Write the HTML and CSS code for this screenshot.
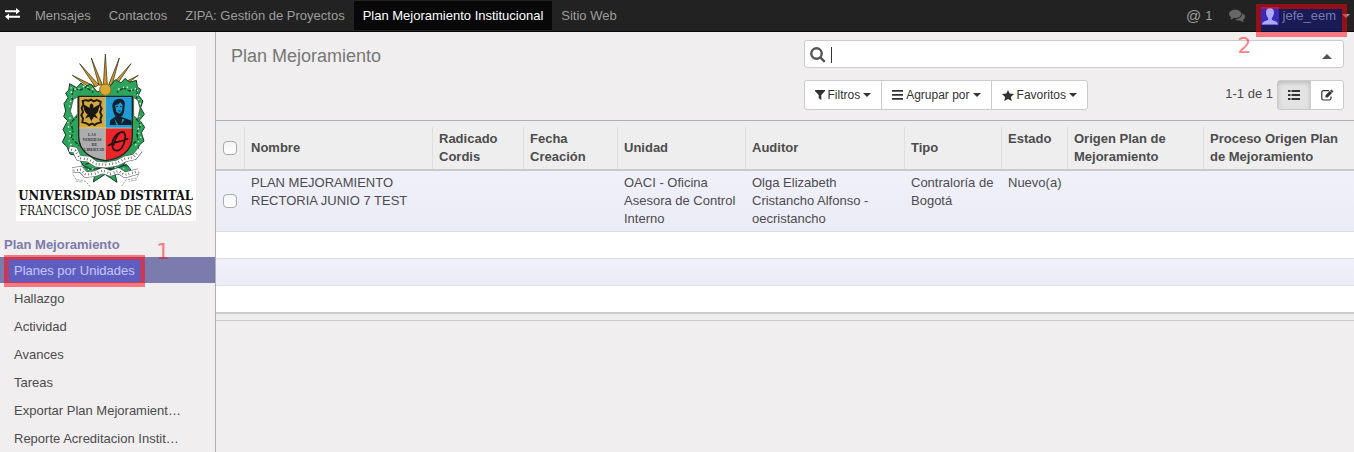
FILE: index.html
```html
<!DOCTYPE html>
<html lang="es">
<head>
<meta charset="utf-8">
<title>Plan Mejoramiento</title>
<link rel="stylesheet" href="styles.css">
</head>
<body>
<nav class="navbar">
  <button class="nav-toggle" aria-label="Cambiar menú">
    <svg width="15" height="12" viewBox="0 0 15 12"><path fill="#fff" d="M0 2.300h11V0l4 3.300-4 3.200V4.300H0zM15 7.700H4V5.500L0 8.700 4 12V9.700h11z"/></svg>
  </button>
  <a class="nav-link" href="#">Mensajes</a>
  <a class="nav-link" href="#">Contactos</a>
  <a class="nav-link" href="#">ZIPA: Gestión de Proyectos</a>
  <a class="nav-link nav-link-active" href="#">Plan Mejoramiento Institucional</a>
  <a class="nav-link" href="#">Sitio Web</a>
  <div class="nav-right">
    <a class="mentions" href="#"><span class="at">@</span> 1</a>
    <button class="chat" aria-label="Conversaciones">
      <svg width="16" height="14" viewBox="0 0 16 14"><g fill="#666"><path d="M6.200.8C2.800.8 0 2.700 0 5c0 1.300.9 2.500 2.200 3.200L1.300 10.500c1.500-.2 2.600-.9 3.300-1.500.5.1 1 .1 1.600.1 3.400 0 6.200-1.800 6.200-4.100S9.600.8 6.200.8z"/><path d="M13.300 4.200c.3 3.200-3 5.800-7.200 6 1.200 1 3.200 1.500 5.200 1.200.8.800 2 1.400 3.500 1.500l-.9-2.100c1.200-.7 2.100-1.700 2.100-2.900 0-1.600-1-2.900-2.700-3.700z"/></g></svg>
    </button>
    <div class="user">
      <button class="user-menu">
        <svg width="18" height="18" viewBox="0 0 18 18"><path fill="#5034a4" d="M0 0h18v18H0z"/><path fill="#dedeff" d="M9 1C6.500 1 5 2.700 5 5.300c0 2.500 1 4.600 2.200 5.600v1.600C6.800 14 1.500 13.500 1 17.500h16c-.5-4-5.800-3.500-6.200-5v-1.600C12 9.900 13 7.800 13 5.300 13 2.700 11.500 1 9 1z"/></svg>
        <span>jefe_eem</span>
      </button>
      <span class="mark mark-user"></span>
      <span class="mark-number mark-number-user">2</span>
    </div>
    <span class="caret caret-nav"></span>
  </div>
</nav>
<div class="shell">
  <aside class="sidebar">
    <a class="logo" href="#">
      <svg viewBox="18 18 540 525" role="img" aria-label="Universidad Distrital Francisco José de Caldas">
        <path fill="#fff" d="M18 18h540v525H18z"/>
        <g fill="#c99a2c" stroke="#2b220c" stroke-width="2"><path d="M280 134 286 42l6 92zM267 136 244 54l33 80zM296 134l32-80-22 82zM256 141 209 71l57 63zM306 134l57-63-47 70zM247 149l-60-43 67 33zM319 139l66-33-58 43z"/></g>
        <g fill="#2ea35b" stroke="#153e28" stroke-width="3">
          <path d="M262 156l-20-24-16 8-13-11-13 14-21-12-3 20-9 8 7 14-12 18 5 22-6 17 12 12-14 26 8 17-10 22 14 13 9 22 22 5 17 29 35 16 24-7 28 7 34-17 18-28 22-7 8-25 14-12-8-25 10-16-15-22 14-17-11-20 7-20-14-17 8-17-11-8-3-20-20 6-14-12-12 14-17-10-19 23z"/>
          <path d="M222 380l-16 14 14 12 35-5-5 25 35-23 36 24-6-26 35 4 14-14-15-18-30 14-37-3-40 4z"/>
        </g>
        <path fill="none" stroke="#123d25" stroke-width="4" stroke-dasharray="5 6 11 4" d="M250 157l-22-15-17 8-20-3-6 25 10 20-8 18 13 20-18 18 7 24-5 22 24 23M321 157l19-13 19 9 20-7 3 21-8 20 16 24-14 21 16 23-12 24 4 20-24 20M215 375l30-7 22 20 38 1 21-19 29 10"/>
        <path fill="none" stroke="#d7f5df" stroke-width="4" stroke-dasharray="5 11 3 9" d="M250 148l-27-9-24 10-16-7 2 30-7 26 11 17-16 35 8 31-4 26 26 29M324 148l24-9 21 12 13-8 1 26 9 25-11 22 15 32-13 22 10 24-23 30M218 386l25 3 24-12M300 375l27 14 25-6"/>
        <path fill="#fff" stroke="#333" stroke-width="2" d="M190 178l13-7v50l-12 15-10-22zM371 172l12 8 7 25-7 32-12-10z"/>
        <path fill="#d5aa3d" d="M207 170h79v95h-79z"/>
        <path fill="#219bd6" d="M286 170h80v95h-80z"/>
        <path fill="#adadb0" d="M207 265h79v95c-34-3-79-20-79-70z"/>
        <path fill="#ec2429" d="M286 265h80v25c0 50-46 67-80 70z"/>
        <path fill="none" stroke="#222" stroke-width="4" d="M206 169h161v119c0 50-42 69-81 74-39-5-80-24-80-74z"/>
        <path fill="none" stroke="#e8d9a0" stroke-width="2" d="M286 170v190M207 264h159"/>
        <path fill="none" stroke="#221c13" stroke-width="6" d="M218 183l10-3 7 3 8-4 8 5 9-4 12 5-2 12 5 9-5 10 5 11-4 11 2 9-12 3-7 5-8-4-8 4-8-5-13-3 2-12-5-9 5-10-4-12 5-10z"/>
        <path fill="#1b1713" d="M245 190l5 5v9c9-6 13-9 18-10-1 15-4 24-12 29l8 13-12-6-8 13-7-13-12 6 8-13c-9-6-12-14-13-29 7 1 12 5 19 10v-9z"/>
        <path fill="#10222d" d="M307 202c0-18 9-26 22-26 12 0 17 9 15 21l-2 18c-1 8-5 13-9 15l32 12v13h-66l2-14 16-12c-6-6-9-18-9-27z"/>
        <path fill="#219bd6" d="M315 195c8 1 12-4 16-8l7 8-2 18-7 8-10-5zM313 235l12 20-6-1zM337 236l-3 16 9-13z"/>
        <path fill="none" stroke="#10222d" stroke-width="3" d="M318 200l6-1M330 200h5M325 213h7"/>
        <g class="crest-motto"><text x="246" y="287">LAS</text><text x="246" y="303">VEREDAS</text><text x="253" y="318">DE</text><text x="252" y="334">LIBERTAD</text></g>
        <path fill="none" stroke="#241013" stroke-width="5" d="M345 277c-21-6-40 18-38 39 1 18 18 21 28 8 9-12 16-39 6-46-14-9-27 22-30 38M294 318c15-15 42-11 61-23"/>
        <circle cx="286" cy="149" r="17" fill="#d9a937" stroke="#8d6a1b" stroke-width="3"/>
        <g fill="none" stroke-linejoin="round">
          <path stroke="#555" stroke-width="18" d="M178 327l17 3 11 24 31 4 20 14 31 3 34-6 23-12 28-6 17-21M187 391l26-3 14 16 28-3 23-9 23 8 24-8 20 13 40-11"/>
          <path stroke="#fff" stroke-width="15" d="M178 327l17 3 11 24 31 4 20 14 31 3 34-6 23-12 28-6 17-21M187 391l26-3 14 16 28-3 23-9 23 8 24-8 20 13 40-11"/>
          <path stroke="#444" stroke-width="7" stroke-dasharray="2 9 2 7" d="M184 329l12 3 13 22 29 5 18 13 33 2 33-6 23-12 26-5 14-17M191 392l22-3 14 15 27-3 24-9 24 9 24-8 18 12 36-10"/>
          <path stroke="#777" stroke-width="2" stroke-dasharray="7 3" d="M190 404l8 14 29 6 15 18M198 423l20 4M388 396l-7 18-34 6-12 18M380 420l-24 4"/>
        </g>
        <text class="crest-name" x="287" y="480">UNIVERSIDAD DISTRITAL</text>
        <text class="crest-sub" x="287" y="524">FRANCISCO JOSÉ DE CALDAS</text>
      </svg>
    </a>
    <h2 class="menu-title">Plan Mejoramiento</h2>
    <ul class="menu">
      <li class="menu-active"><a href="#">Planes por Unidades</a><span class="mark mark-menu"></span><span class="mark-number mark-number-menu">1</span></li>
      <li><a href="#">Hallazgo</a></li>
      <li><a href="#">Actividad</a></li>
      <li><a href="#">Avances</a></li>
      <li><a href="#">Tareas</a></li>
      <li><a href="#">Exportar Plan Mejoramient…</a></li>
      <li><a href="#">Reporte Acreditacion Instit…</a></li>
    </ul>
  </aside>
  <main class="main">
    <header class="control-panel">
      <h1>Plan Mejoramiento</h1>
      <div class="controls">
        <div class="search">
          <svg width="16" height="16" viewBox="0 0 16 16"><g fill="none" stroke="#555" stroke-width="2.400"><circle cx="6.500" cy="6.500" r="5.200"/><path d="m10.300 10.300 4.500 4.500"/></g></svg>
          <input type="text" aria-label="Buscar" autofocus>
          <span class="cursor"></span>
          <button class="search-toggle" aria-label="Opciones de búsqueda"><span class="caret caret-up"></span></button>
        </div>
        <div class="tools">
          <div class="group">
            <button><svg width="10" height="10" viewBox="0 0 10 10"><path d="M0 0h10v1L6.300 5v5L3.700 8V5L0 1z"/></svg>Filtros<span class="caret"></span></button>
            <button><svg width="11" height="10" viewBox="0 0 11 10"><path d="M0 0h11v1.700H0zM0 4h11v1.700H0zM0 8h11v1.700H0z"/></svg>Agrupar por<span class="caret"></span></button>
            <button><svg width="12" height="11" viewBox="0 0 12 11"><path d="m6 0 1.700 3.600 4.300.5-3.100 2.800.8 4.100L6 9l-3.700 2 .8-4.100L0 4.100l4.300-.5z"/></svg>Favoritos<span class="caret"></span></button>
          </div>
          <div class="paging">
            <span>1-1 de 1</span>
            <div class="group views">
              <button class="pressed" aria-label="Lista"><svg width="12" height="10" viewBox="0 0 12 10"><path d="M0 0h2.500v2H0zM3.500 0H12v2H3.500zM0 4h2.500v2H0zM3.500 4H12v2H3.500zM0 8h2.500v2H0zM3.500 8H12v2H3.500z"/></svg></button>
              <button aria-label="Formulario"><svg width="13" height="12" viewBox="0 0 13 12"><path fill="none" stroke="#333" stroke-width="1.200" d="M8 1.700H2.500Q.8 1.700.8 3.500v5.700q0 1.800 1.700 1.800h5.700q1.800 0 1.800-1.800V7.500"/><path d="M4.500 8.500V6.200L10.300.4l2.200 2.200-5.800 5.900z"/><path stroke="#fff" stroke-width=".7" d="m9 1.700 2.200 2.200"/></svg></button>
            </div>
          </div>
        </div>
      </div>
    </header>
    <table class="list">
      <colgroup><col class="c-check"><col class="c-name"><col class="c-code"><col class="c-date"><col class="c-unit"><col class="c-auditor"><col class="c-type"><col class="c-state"><col class="c-origin"><col></colgroup>
      <thead>
        <tr><th><input type="checkbox" aria-label="Seleccionar todo"></th><th>Nombre</th><th>Radicado Cordis</th><th>Fecha Creación</th><th>Unidad</th><th>Auditor</th><th>Tipo</th><th class="top">Estado</th><th>Origen Plan de Mejoramiento</th><th>Proceso Origen Plan de Mejoramiento</th></tr>
      </thead>
      <tbody>
        <tr><td class="check"><input type="checkbox" aria-label="Seleccionar fila"></td><td>PLAN MEJORAMIENTO RECTORIA JUNIO 7 TEST</td><td></td><td></td><td>OACI - Oficina Asesora de Control Interno</td><td>Olga Elizabeth Cristancho Alfonso - oecristancho</td><td>Contraloría de Bogotá</td><td>Nuevo(a)</td><td></td><td></td></tr>
        <tr class="blank"><td colspan="10"></td></tr>
        <tr class="blank"><td colspan="10"></td></tr>
        <tr class="blank"><td colspan="10"></td></tr>
      </tbody>
      <tfoot><tr><td colspan="10"></td></tr></tfoot>
    </table>
  </main>
</div>
</body>
</html>
```
FILE: styles.css
```css
* { box-sizing: border-box; }
body {
  margin: 0;
  min-height: 100vh;
  display: flex;
  flex-direction: column;
  overflow: hidden;
  background: #f0eeee;
  color: #4c4c4c;
  font: 13px/18px "Liberation Sans", Arial, sans-serif;
}
button { font: inherit; color: inherit; background: none; border: 0; padding: 0; }
a { color: inherit; text-decoration: none; }
svg { display: block; flex: none; }

.navbar {
  display: flex;
  position: relative;
  z-index: 1;
  height: 32px;
  background: #222;
  border-bottom: 1px solid #080808;
  color: #9d9d9d;
  line-height: 30px;
}
.nav-toggle { padding: 6px 6px 10px 5px; }
.nav-link { padding: 0 9px; margin: 1px 0; white-space: nowrap; }
.nav-link-active { background: #080808; color: #fff; }
.nav-right { display: flex; align-items: center; margin-left: auto; }
.mentions { display: flex; align-items: center; gap: 4px; margin-right: 16px; }
.at { font-size: 15px; }
.chat { margin-right: 16px; }
.user { position: relative; }
.user-menu { display: flex; align-items: center; gap: 4px; padding: 0 6px 0 0; }
.caret { display: inline-block; border: 4px solid transparent; border-top-color: currentColor; border-bottom: 0; }
.caret-nav { margin-right: 4px; }

.mark {
  position: absolute;
  border: 5px solid rgba(255, 0, 16, .5);
  background: rgba(0, 0, 255, .23) padding-box;
  pointer-events: none;
}
.mark-user { inset: 3px -5px -6px -5px; }
.mark-menu { left: 4px; top: -2px; width: 141px; height: 32px; }
.mark-number { position: absolute; font: 22px/24px "DejaVu Sans", sans-serif; color: rgba(255, 0, 16, .5); }
.mark-number-user { left: -23px; top: 33px; }
.mark-number-menu { right: 45px; top: -17px; }

.shell { display: flex; flex: 1; }
.sidebar { width: 216px; flex: none; border-right: 1px solid #afafb6; }
.logo { display: block; width: 180px; margin: 14px 0 15px 16px; }
.crest-motto { font: bold 12px "Liberation Serif", serif; text-anchor: middle; fill: #333; }
.crest-name { font: bold 39px "DejaVu Serif Condensed", "DejaVu Serif", serif; text-anchor: middle; fill: #111; }
.crest-sub { font: 36px "DejaVu Serif Condensed", "DejaVu Serif", serif; text-anchor: middle; fill: #222; }
.menu-title { margin: 0 4px 3px; font-size: 13px; line-height: 18px; color: #7c7bad; }
.menu { list-style: none; margin: 0; padding: 0; }
.menu li { position: relative; margin-bottom: 2px; }
.menu a { display: block; padding: 5px 14px 3px; white-space: nowrap; }
.menu-active { background: #7c7bad; color: #fff; }

.main { flex: 1; min-width: 0; }
.control-panel {
  display: flex;
  justify-content: space-between;
  height: 89px;
  padding: 8px 10px 0 15px;
  border-bottom: 1px solid #afafb6;
}
h1 { margin: 4px 0 0; font-size: 18px; line-height: 24px; font-weight: normal; color: #777; }
.controls { width: calc(50% - 16px); }
.search {
  display: flex;
  align-items: center;
  height: 28px;
  padding: 2px 11px 0 5px;
  background: #fff;
  border: 1px solid #ccc;
  border-radius: 3px;
  position: relative;
}
.search input { flex: 1; min-width: 0; border: 0; outline: 0; background: none; padding: 0 6px; font: inherit; caret-color: transparent; }
.cursor { position: absolute; left: 26px; top: 6px; width: 1px; height: 16px; background: #333; }
.caret-up { border: 5px solid transparent; border-bottom-color: #555; border-top: 0; }
.search-toggle { line-height: 10px; }
.tools { display: flex; justify-content: space-between; margin-top: 12px; }
.group { display: flex; height: 30px; background: #fff; border: 1px solid #ccc; border-radius: 3px; font-size: 12px; color: #333; }
.group button { display: flex; align-items: center; gap: 3px; padding: 0 10px; }
.group button + button { border-left: 1px solid #ccc; }
.group svg { fill: #333; }
.paging { display: flex; gap: 4px; line-height: 28px; }
.views .pressed { background: #e3e3e3; box-shadow: inset 0 2px 4px #bbb; }
.views button { width: 32px; justify-content: center; }
.views button + button { width: 33px; }

.list { width: 100%; table-layout: fixed; border-collapse: separate; border-spacing: 0; }
.c-check { width: 28px; }
.c-name { width: 188px; }
.c-code { width: 91px; }
.c-date { width: 94px; }
.c-unit { width: 128px; }
.c-auditor { width: 159px; }
.c-type { width: 97px; }
.c-state { width: 66px; }
.c-origin { width: 136px; }
.list th, .list td { padding: 3px 6px 3px 7px; text-align: left; vertical-align: top; border-bottom: 1px solid #dcdce0; }
.list th {
  padding-top: 9px;
  vertical-align: middle;
  border-bottom: 2px solid #cacaca;
  background: #eee linear-gradient(#dfdfdf, #dfdfdf) no-repeat 0 6px / 1px 100%;
}
.list th:first-child { background: #eee; }
.list .top { vertical-align: top; }
.list .check { vertical-align: middle; }
.list input {
  appearance: none;
  display: block;
  width: 14px;
  height: 14px;
  margin: 0;
  border: 1px solid #aaa;
  border-radius: 4px;
  background: linear-gradient(#f4f4f4, #fff);
}
tbody tr { background: #fff; }
tbody tr:nth-child(odd) { background: linear-gradient(#f0f0fa, #ececf6); }
.list .blank td { height: 27px; }
.list .blank:last-child td { height: 28px; border-bottom: 2px solid #cacaca; }
.list tfoot td { height: 7px; padding: 0; background: #eee; border-bottom-color: #cacaca; }
```
